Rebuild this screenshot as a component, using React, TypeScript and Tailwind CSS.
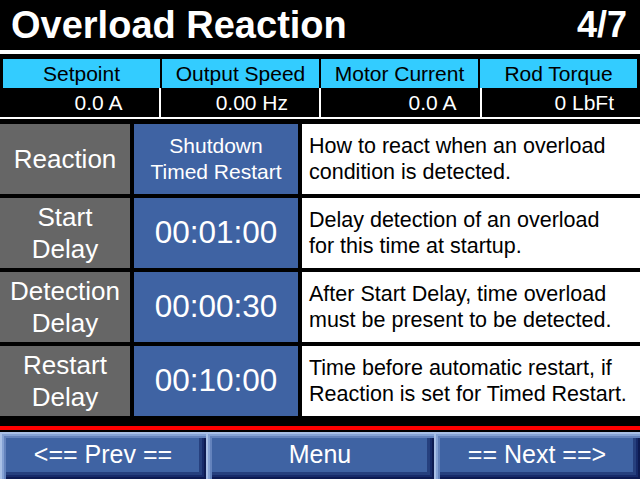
const font = { fontFamily: '"Liberation Sans", Arial, sans-serif' };

const readouts = [
  { label: "Setpoint", value: "0.0 A", pad: "pr-[36px]" },
  { label: "Output Speed", value: "0.00 Hz", pad: "pr-[31px]" },
  { label: "Motor Current", value: "0.0 A", pad: "pr-[23px]" },
  { label: "Rod Torque", value: "0 LbFt", pad: "pr-[26px]" },
];

const rows = [
  {
    name: ["Reaction"],
    value: ["Shutdown", "Timed Restart"],
    help: ["How to react when an overload", "condition is detected."],
  },
  {
    name: ["Start", "Delay"],
    value: ["00:01:00"],
    help: ["Delay detection of an overload", "for this time at startup."],
  },
  {
    name: ["Detection", "Delay"],
    value: ["00:00:30"],
    help: ["After Start Delay, time overload", "must be present to be detected."],
  },
  {
    name: ["Restart", "Delay"],
    value: ["00:10:00"],
    help: ["Time before automatic restart, if", "Reaction is set for Timed Restart."],
  },
];

const bevel =
  "shadow-[inset_2px_2px_0_#a9c0e6,inset_4px_4px_0_#85a2d4,inset_6px_6px_0_#6483bd,inset_-2px_-2px_0_#0d1b52,inset_-4px_-4px_0_#172b6a,inset_-7px_-7px_0_#26407e]";

function NavButton({ label, width }: { label: string; width: string }) {
  return (
    <button
      className={`${width} h-full bg-[#3f63a3] ${bevel} flex items-center justify-center text-white text-[25px] leading-none pb-[3px]`}
      style={font}
    >
      {label}
    </button>
  );
}

export default function App() {
  return (
    <div className="w-[640px] h-[479px] bg-black overflow-hidden flex flex-col" style={font}>
      {/* Title */}
      <div className="h-[50px] flex items-center justify-between pl-[11px] pr-[13px] text-white font-bold leading-none">
        <span className="text-[38px]">Overload Reaction</span>
        <span className="text-[36px]">4/7</span>
      </div>
      <div className="h-[4px] bg-white" />
      <div className="h-[5px]" />

      {/* Live readouts */}
      <div className="flex flex-col">
        <div className="grid grid-cols-4 gap-x-[2px] px-[3px] [&>div]:bg-[#33ccff]">
          {readouts.map((r) => (
            <div key={r.label} className="h-[29px] flex items-center justify-center text-black text-[21px] leading-none">
              {r.label}
            </div>
          ))}
        </div>
        <div className="grid grid-cols-4 gap-x-[2px] bg-white">
          {readouts.map((r) => (
            <div
              key={r.label}
              className={`h-[29px] bg-black flex items-center justify-end text-white text-[21px] leading-none ${r.pad}`}
            >
              {r.value}
            </div>
          ))}
        </div>
        <div className="h-[2px] bg-white" />
      </div>

      {/* Settings rows */}
      <div className="flex flex-col gap-[4px] pt-[5px]">
        {rows.map((row) => (
          <div key={row.name.join(" ")} className="h-[70px] flex gap-[4px]">
            <div className="w-[130px] bg-[#666666] flex flex-col items-center justify-center text-white text-[26px] leading-[32px]">
              {row.name.map((l) => (
                <span key={l}>{l}</span>
              ))}
            </div>
            <div
              className={`w-[164px] bg-[#3f63a3] flex flex-col items-center justify-center text-white ${
                row.value.length > 1 ? "text-[21px] leading-[26px]" : "text-[31.5px] leading-none"
              }`}
            >
              {row.value.map((l) => (
                <span key={l}>{l}</span>
              ))}
            </div>
            <div className="flex-1 bg-white flex flex-col justify-center pl-[7px] text-black text-[21.5px] leading-[26px]">
              {row.help.map((l) => (
                <span key={l}>{l}</span>
              ))}
            </div>
          </div>
        ))}
      </div>

      <div className="h-[10px]" />
      <div className="h-[4px] bg-[#ff0000]" />
      <div className="h-[2px]" />

      {/* Navigation */}
      <div className="flex-1 flex">
        <NavButton label="<== Prev ==" width="w-[206px]" />
        <NavButton label="Menu" width="w-[228px]" />
        <NavButton label="== Next ==>" width="w-[206px]" />
      </div>
    </div>
  );
}
